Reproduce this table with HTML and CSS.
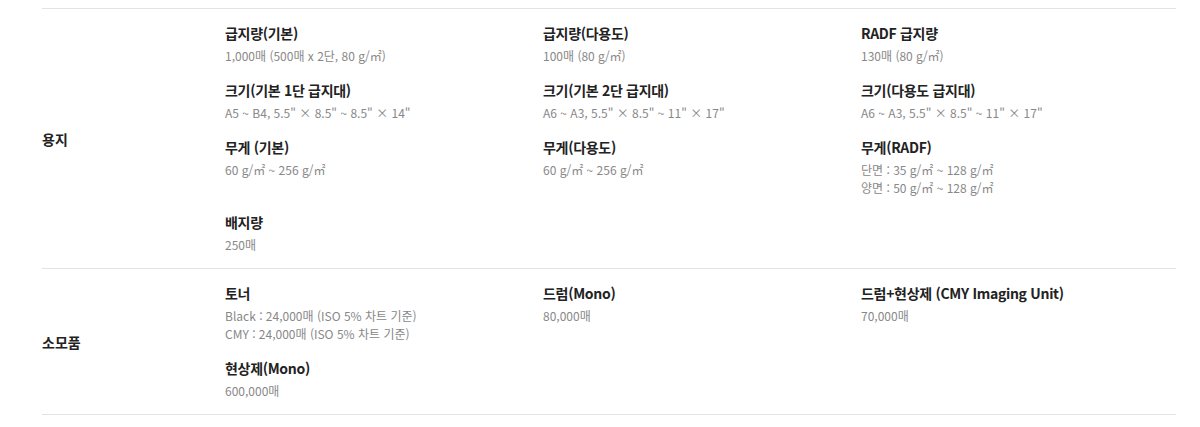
FILE: index.html
```html
<!DOCTYPE html>
<html lang="ko">
<head>
<meta charset="utf-8">
<link rel="stylesheet" href="styles.css">
</head>
<body>
<div class="spec">
  <div class="spec-row">
    <div class="spec-label">용지</div>
    <div class="spec-items">
      <div class="item"><div class="item-title">급지량(기본)</div><div class="item-value">1,000매 (500매 x 2단, 80 g/㎡)</div></div>
      <div class="item"><div class="item-title">급지량(다용도)</div><div class="item-value">100매 (80 g/㎡)</div></div>
      <div class="item"><div class="item-title">RADF 급지량</div><div class="item-value">130매 (80 g/㎡)</div></div>
      <div class="item"><div class="item-title">크기(기본 1단 급지대)</div><div class="item-value">A5 ~ B4, 5.5" × 8.5" ~ 8.5" × 14"</div></div>
      <div class="item"><div class="item-title">크기(기본 2단 급지대)</div><div class="item-value">A6 ~ A3, 5.5" × 8.5" ~ 11" × 17"</div></div>
      <div class="item"><div class="item-title">크기(다용도 급지대)</div><div class="item-value">A6 ~ A3, 5.5" × 8.5" ~ 11" × 17"</div></div>
      <div class="item"><div class="item-title">무게 (기본)</div><div class="item-value">60 g/㎡ ~ 256 g/㎡</div></div>
      <div class="item"><div class="item-title">무게(다용도)</div><div class="item-value">60 g/㎡ ~ 256 g/㎡</div></div>
      <div class="item"><div class="item-title">무게(RADF)</div><div class="item-value">단면 : 35 g/㎡ ~ 128 g/㎡<br>양면 : 50 g/㎡ ~ 128 g/㎡</div></div>
      <div class="item"><div class="item-title">배지량</div><div class="item-value">250매</div></div>
    </div>
  </div>
  <div class="spec-row">
    <div class="spec-label">소모품</div>
    <div class="spec-items">
      <div class="item"><div class="item-title">토너</div><div class="item-value">Black : 24,000매 (ISO 5% 차트 기준)<br>CMY : 24,000매 (ISO 5% 차트 기준)</div></div>
      <div class="item"><div class="item-title">드럼(Mono)</div><div class="item-value">80,000매</div></div>
      <div class="item"><div class="item-title">드럼+현상제 (CMY Imaging Unit)</div><div class="item-value">70,000매</div></div>
      <div class="item"><div class="item-title">현상제(Mono)</div><div class="item-value">600,000매</div></div>
    </div>
  </div>
</div>
</body>
</html>
```
FILE: styles.css
```css
html, body {
  margin: 0;
  padding: 0;
  background: #ffffff;
}
body {
  font-family: "Noto Sans CJK KR", "Noto Sans", sans-serif;
  color: #222222;
}
.spec {
  margin: 8px 24px 0 42px;
  border-bottom: 1px solid #e3e3e3;
}
.spec-row {
  display: flex;
  align-items: center;
  border-top: 1px solid #e3e3e3;
  padding: 14px 0;
}
.spec-label {
  width: 183px;
  flex: none;
  font-size: 14px;
  font-weight: 700;
  line-height: 20px;
}
.spec-items {
  flex: 1;
  display: grid;
  grid-template-columns: repeat(3, 318px);
  row-gap: 15px;
}
.item-title {
  font-size: 14px;
  font-weight: 700;
  line-height: 20px;
  margin-bottom: 4px;
  letter-spacing: -0.3px;
}
.item-value {
  font-size: 12px;
  line-height: 18px;
  color: #888888;
}
```
